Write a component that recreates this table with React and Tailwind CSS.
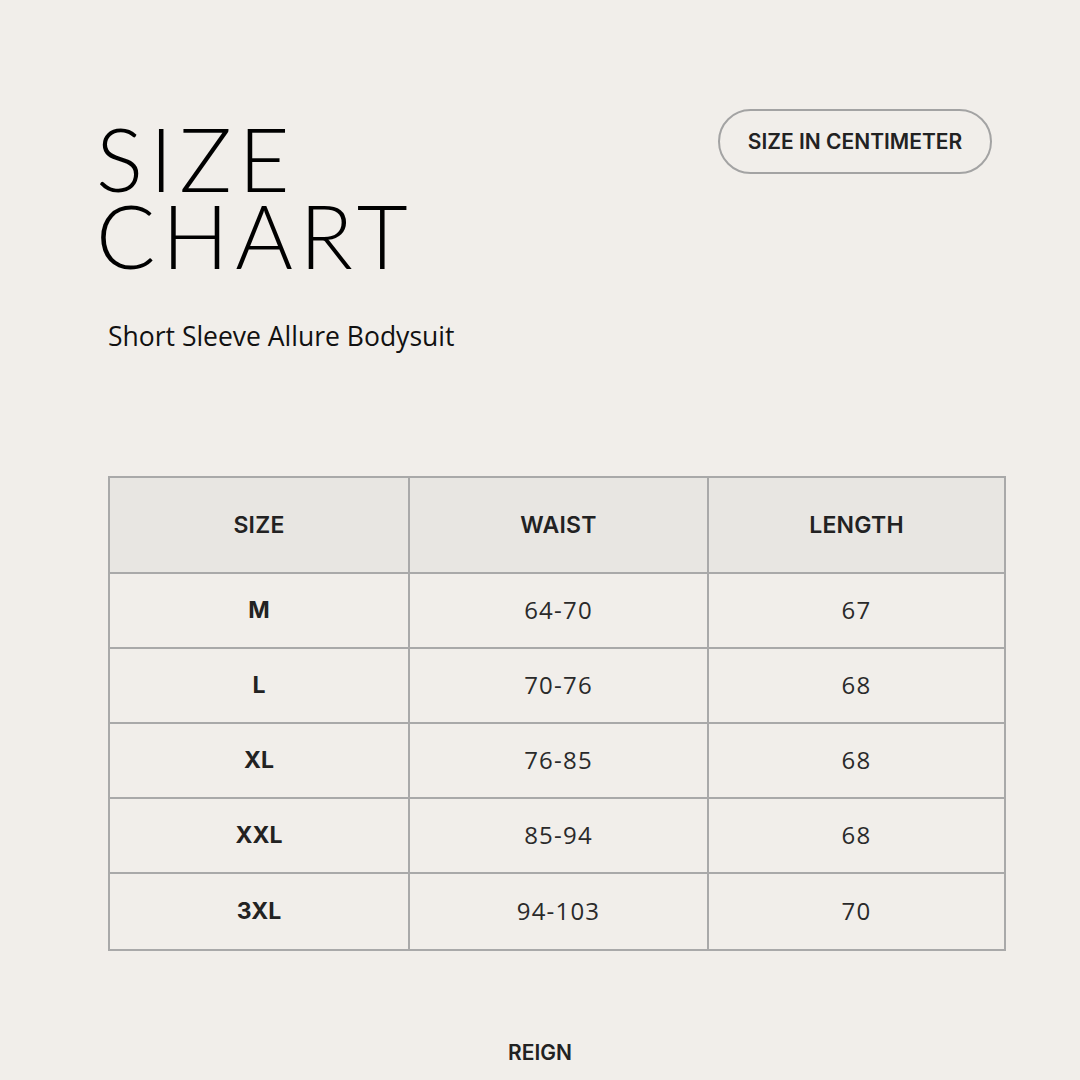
const rows = [
  { size: 'M', waist: '64-70', length: '67' },
  { size: 'L', waist: '70-76', length: '68' },
  { size: 'XL', waist: '76-85', length: '68' },
  { size: 'XXL', waist: '85-94', length: '68' },
  { size: '3XL', waist: '94-103', length: '70' },
];

export default function App() {
  return (
    <div className="w-[1080px] h-[1080px] bg-[#f1eeea] relative overflow-hidden font-['Inter',sans-serif] text-[#1f1f1f]">
      {/* Header */}
      <div className="flex justify-between pt-[109px] pl-[96px] pr-[88px]">
        <h1 className="font-['Lato',sans-serif] font-light text-[88px] leading-[77px] tracking-[0.075em] text-black pt-[11px]">
          SIZE
          <br />
          CHART
        </h1>
        <div className="h-[65px] w-[274px] rounded-full border-2 border-[#a3a3a3] flex items-center justify-center text-[21px] font-semibold text-[#222]">
          SIZE IN CENTIMETER
        </div>
      </div>

      <p className="pl-[108px] mt-[43px] font-['Open_Sans',sans-serif] text-[26.5px] text-[#111]">
        Short Sleeve Allure Bodysuit
      </p>

      {/* Table */}
      <div className="ml-[108px] mt-[119px] w-[898px] border-2 border-[#a9a9a9]">
        <div className="grid grid-cols-[300px_299px_1fr] h-[96px] bg-[#e8e6e2] border-b-2 border-[#a9a9a9]">
          {['SIZE', 'WAIST', 'LENGTH'].map((h, i) => (
            <div
              key={h}
              className={`flex items-center justify-center text-[23px] font-semibold tracking-[0.01em] text-[#222] ${i < 2 ? 'border-r-2 border-[#a9a9a9]' : ''}`}
            >
              {h}
            </div>
          ))}
        </div>
        {rows.map((r, idx) => (
          <div
            key={r.size}
            className={`grid grid-cols-[300px_299px_1fr] h-[75px] ${idx < rows.length - 1 ? 'border-b-2 border-[#a9a9a9]' : ''}`}
          >
            <div className="flex items-center justify-center border-r-2 border-[#a9a9a9] text-[23px] font-bold text-[#222]">
              {r.size}
            </div>
            <div className="flex items-center justify-center border-r-2 border-[#a9a9a9] font-['Open_Sans',sans-serif] text-[24px] tracking-[0.05em] text-[#2a2a2a]">
              {r.waist}
            </div>
            <div className="flex items-center justify-center font-['Open_Sans',sans-serif] text-[24px] tracking-[0.05em] text-[#2a2a2a]">
              {r.length}
            </div>
          </div>
        ))}
      </div>

      <div className="mt-[86px] text-center text-[21px] font-semibold text-[#222]">REIGN</div>
    </div>
  );
}
